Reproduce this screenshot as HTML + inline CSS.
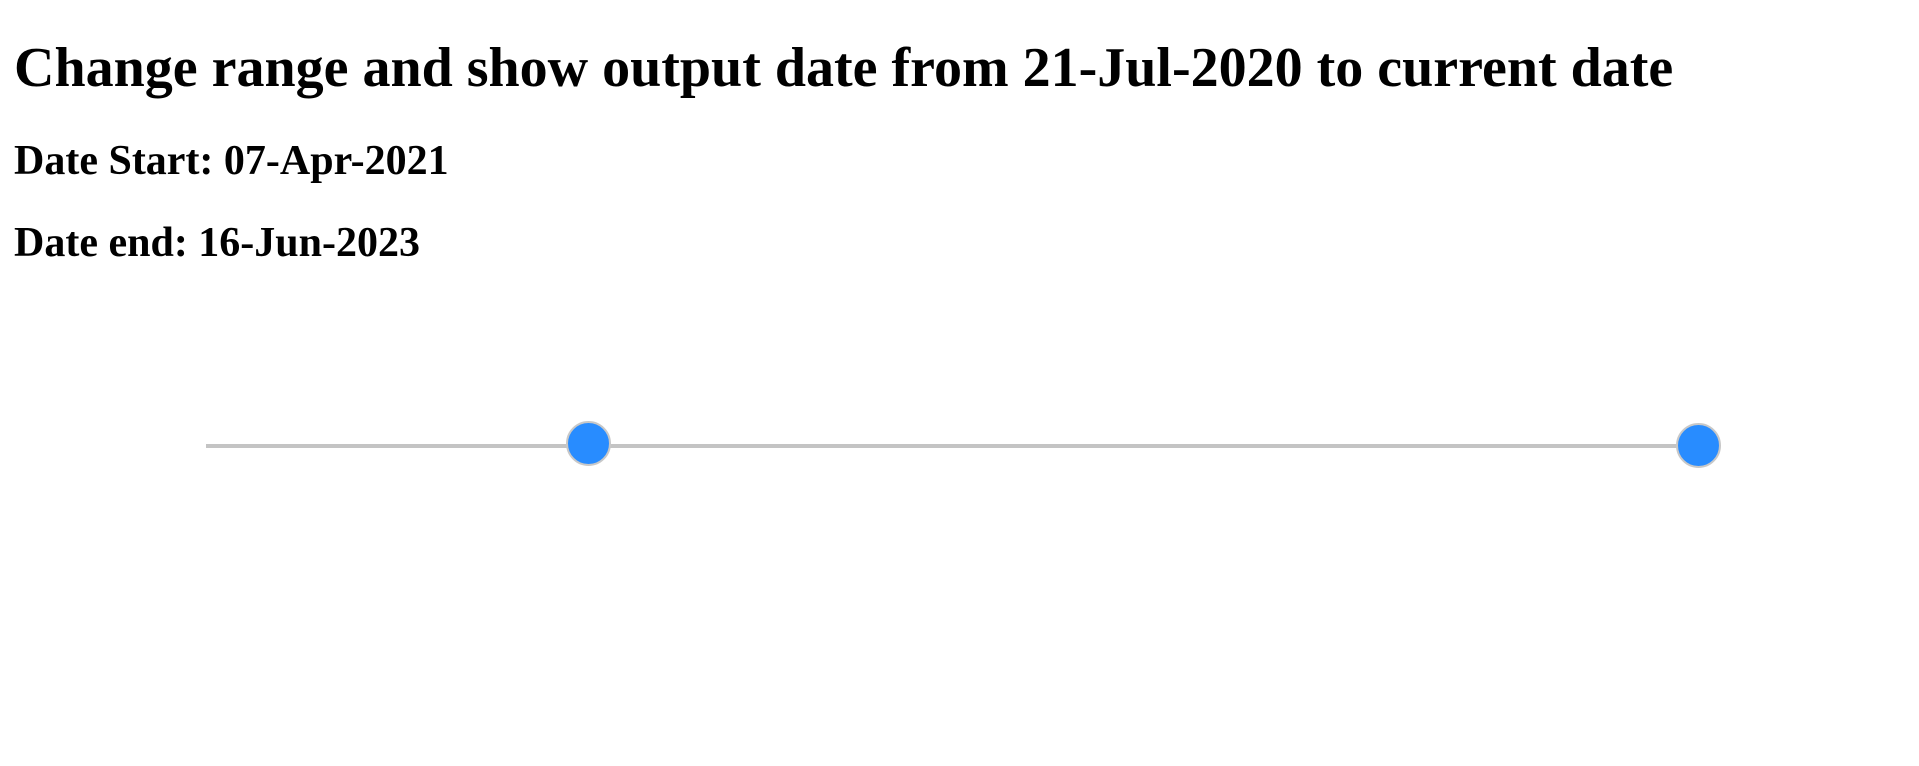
<!DOCTYPE html>
<html><head><style>
html,body{margin:0;padding:0;background:#fff;}
body{width:1919px;height:766px;overflow:hidden;position:relative;font-family:"Liberation Serif",serif;color:#000;}
h1{position:absolute;left:14px;top:37px;margin:0;font-size:56px;font-weight:bold;line-height:62px;white-space:nowrap;}
h2{position:absolute;left:14px;margin:0;font-size:42px;font-weight:bold;line-height:47px;white-space:nowrap;}
.track{position:absolute;left:206px;top:444px;width:1492px;height:4px;background:#c4c4c4;}
.thumb{position:absolute;width:41px;height:41px;border-radius:50%;background:#288cff;border:2px solid #c8c8c8;}
</style></head><body>
<h1>Change range and show output date from 21-Jul-2020 to current date</h1>
<h2 style="top:138px">Date Start: 07-Apr-2021</h2>
<h2 style="top:220px">Date end: 16-Jun-2023</h2>
<div class="track"></div>
<div class="thumb" style="left:566px;top:421px"></div>
<div class="thumb" style="left:1676px;top:423px"></div>
</body></html>
